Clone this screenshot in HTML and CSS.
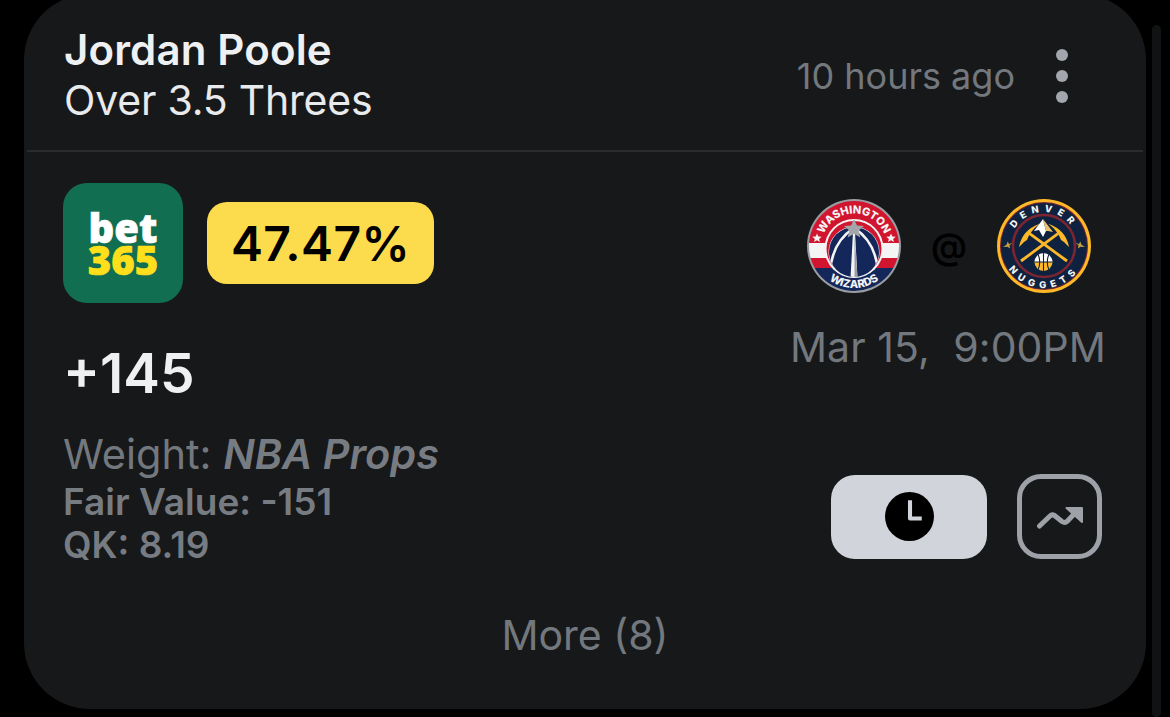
FILE: index.html
```html
<!DOCTYPE html>
<html lang="en">
<head>
<meta charset="utf-8">
<title>Bet card</title>
<link rel="stylesheet" href="styles.css">
</head>
<body>
<div class="stage">
  <main class="card">
    <header class="head">
      <div class="who">
        <div class="name">Jordan Poole</div>
        <div class="market">Over 3.5 Threes</div>
      </div>
      <div class="meta">
        <span class="ago">10 hours ago</span>
        <span class="dots"><i></i><i></i><i></i></span>
      </div>
    </header>
    <section class="body">
      <div class="left">
        <div class="book-row">
          <div class="book"><span class="b1">bet</span><span class="b2">365</span></div>
          <div class="pct">47.47%</div>
        </div>
        <div class="odds">+145</div>
        <div class="weight">Weight: <em>NBA Props</em></div>
        <div class="stat">Fair Value: -151</div>
        <div class="stat">QK: 8.19</div>
      </div>
      <div class="right">
        <div class="teams">
          <svg class="logo" viewBox="0 0 96 96" aria-label="Washington Wizards">
            <defs>
              <clipPath id="wc"><circle cx="48" cy="48" r="45"/></clipPath>
              <clipPath id="wb"><circle cx="48" cy="54" r="25"/></clipPath>
              <path id="wtop" d="M15.5 48 A32.5 32.5 0 0 1 80.5 48"/>
              <path id="wbot" d="M6 48 A42 42 0 0 0 90 48"/>
            </defs>
            <circle cx="48" cy="48" r="47" fill="#9a9da3"/>
            <g clip-path="url(#wc)">
              <rect width="96" height="45" fill="#d2152f"/>
              <rect y="45" width="96" height="15" fill="#f4f4f4"/>
              <rect y="60" width="96" height="10" fill="#d2152f"/>
              <rect y="70" width="96" height="26" fill="#14275a"/>
            </g>
            <circle cx="48" cy="50.5" r="29.5" fill="#f4f4f4"/>
            <circle cx="48" cy="50.5" r="27.5" fill="#d2152f"/>
            <circle cx="48" cy="54" r="25.5" fill="#f4f4f4"/>
            <circle cx="48" cy="54" r="25" fill="#14275a"/>
            <g clip-path="url(#wb)">
              <path d="M24 74 Q26 44 48 30 Q70 44 72 74" fill="none" stroke="#f4f4f4" stroke-width="2.6"/>
              <path d="M44.5 80 L47 34 H49 L51.5 80Z" fill="#f4f4f4"/>
              <path d="M48.5 36 L51.5 80 H48.5Z" fill="#9a9da3"/>
            </g>
            <path d="M48 21 l3 6.5 7 .5 -5.4 4.6 1.7 7 -6.3 -3.8 -6.3 3.8 1.7 -7 -5.4 -4.6 7 -.5z" fill="#a2a5aa"/>
            <path d="M11 35.5 l1.3 3 3.4 .2 -2.6 2.2 .9 3.2 -3 -1.8 -3 1.8 .9 -3.2 -2.6 -2.2 3.4 -.2z M85 35.5 l1.3 3 3.4 .2 -2.6 2.2 .9 3.2 -3 -1.8 -3 1.8 .9 -3.2 -2.6 -2.2 3.4 -.2z" fill="#f4f4f4"/>
            <text class="w-text"><textPath href="#wtop" startOffset="50%" text-anchor="middle">WASHINGTON</textPath></text>
            <text class="w-text"><textPath href="#wbot" startOffset="50%" text-anchor="middle">WIZARDS</textPath></text>
          </svg>
          <span class="at">@</span>
          <svg class="logo" viewBox="0 0 96 96" aria-label="Denver Nuggets">
            <defs>
              <path id="dtop" d="M14 48 A34 34 0 0 1 82 48"/>
              <path id="dbot" d="M6 48 A42 42 0 0 0 90 48"/>
              <clipPath id="dball"><circle cx="47.5" cy="64" r="9"/></clipPath>
            </defs>
            <circle cx="48" cy="48" r="47" fill="#fdb927"/>
            <circle cx="48" cy="48" r="44" fill="#7c2530"/>
            <circle cx="48" cy="48" r="43" fill="#0e2240"/>
            <circle cx="48" cy="48" r="31" fill="none" stroke="#7c2530" stroke-width="2.6"/>
            <path d="M33.7 35.7 L71 63" stroke="#fdb927" stroke-width="2.8" fill="none"/>
            <path d="M62 35.7 L25 63" stroke="#fdb927" stroke-width="2.8" fill="none"/>
            <path d="M23 49 Q26 32 43.7 25.7 Q34 33 31 42 L28 44Z" fill="#fdb927"/>
            <path d="M73 49 Q70 32 52.3 25.7 Q62 33 65 42 L68 44Z" fill="#fdb927"/>
            <path d="M47 21 L38 33 L43 32 L47 39 L50 33Z" fill="#fff"/>
            <path d="M47 21 L57 34 L52 33 L50 33Z" fill="#e9c26a"/>
            <g clip-path="url(#dball)">
              <rect x="38" y="55" width="20" height="9" fill="#fff"/>
              <rect x="38" y="64" width="20" height="9" fill="#fdb927"/>
              <path d="M38 64 H58 M47.5 55 V73 M42 56 Q45.5 64 42 72 M53 56 Q49.5 64 53 72" stroke="#0e2240" stroke-width="1.1" fill="none"/>
            </g>
            <path d="M7 49 l3.5 -2.2 1.3 -3.4 1.3 2.8 3.4 -1.6 -3 3 .6 2.8 -2.6 -1.6z M89 49 l-3.5 -2.2 -1.3 -3.4 -1.3 2.8 -3.4 -1.6 3 3 -.6 2.8 2.6 -1.6z" fill="#c9a03a"/>
            <text class="d-text"><textPath href="#dtop" startOffset="50%" text-anchor="middle">DENVER</textPath></text>
            <text class="d-text"><textPath href="#dbot" startOffset="50%" text-anchor="middle">NUGGETS</textPath></text>
          </svg>
        </div>
        <div class="date">Mar 15,&nbsp; 9:00PM</div>
        <div class="actions">
          <button class="btn-clock" type="button" aria-label="Clock">
            <svg viewBox="0 0 48 48" width="49" height="49"><circle cx="24" cy="24" r="24" fill="#000"/><path d="M24.5 8 V26 H36" fill="none" stroke="#d1d5db" stroke-width="4" stroke-linejoin="round"/></svg>
          </button>
          <button class="btn-chart" type="button" aria-label="Chart">
            <svg viewBox="0 0 48 28" width="48" height="28"><path d="M3.5 23 L14 13 Q16 11 18.5 12.5 L26 18.5 Q29 20.5 31.5 18 L40 9" fill="none" stroke="#9ea2a8" stroke-width="5" stroke-linecap="round" stroke-linejoin="round"/><path d="M30.5 5 H46 V19Z" fill="#9ea2a8" stroke="#9ea2a8" stroke-width="2" stroke-linejoin="round"/></svg>
          </button>
        </div>
      </div>
    </section>
    <div class="more">More (8)</div>
  </main>
  <div class="scrollbar"></div>
</div>
</body>
</html>
```

FILE: styles.css
```css
* { box-sizing: border-box; }
html, body { margin: 0; height: 100%; background: #000; overflow: hidden; }
body { font-family: Inter, "Liberation Sans", sans-serif; }
.stage { display: flex; align-items: flex-start; padding-left: 24px; height: 717px; }
.card {
  width: 1122px; height: 715px; margin-top: -6px; flex: none;
  background: #17181a; border-radius: 66px;
  display: flex; flex-direction: column;
}
.scrollbar { width: 9px; height: 692px; margin: 25px 0 0 6px; background: #111213; border-radius: 5px; flex: none; }
.head {
  height: 158px; margin: 0 3px; padding: 31px 75px 0 37px;
  border-bottom: 2px solid #2a2b2d;
  display: flex; justify-content: space-between; align-items: flex-start;
}
.name { font-size: 42px; font-weight: 600; line-height: 50px; letter-spacing: .15px; color: #eef0f2; }
.market { font-size: 41px; line-height: 51px; letter-spacing: -.2px; color: #e8eaec; }
.meta { display: flex; align-items: center; gap: 41px; margin-top: 24px; }
.ago { font-size: 36px; line-height: 50px; color: #72787e; }
.dots { display: flex; flex-direction: column; gap: 9px; }
.dots i { display: block; width: 12px; height: 12px; border-radius: 50%; background: #a3a6ad; }
.body { flex: 1; display: flex; justify-content: space-between; padding: 31px 40px 0 39px; }
.book-row { display: flex; align-items: center; gap: 24px; }
.book {
  width: 120px; height: 120px; border-radius: 24px; background: #126e51;
  display: flex; flex-direction: column; align-items: center; justify-content: center;
  font-family: "Open Sans", sans-serif; font-weight: 800; font-size: 40px; line-height: 32px; padding-top: 2px;
  -webkit-text-stroke: .7px currentColor;
}
.b1 { color: #fff; }
.b2 { color: #ffdf1b; }
.pct {
  width: 227px; height: 82px; border-radius: 20px; background: #fcdc4d; color: #000;
  font-size: 48px; font-weight: 600; letter-spacing: .4px; display: flex; align-items: center; justify-content: center;
}
.odds { font-size: 55px; font-weight: 600; line-height: 60px; color: #eef0f2; margin-top: 40px; }
.weight { font-size: 41.5px; line-height: 51px; color: #72787e; margin-top: 26px; }
.weight em { font-weight: 600; color: #777c83; }
.stat { font-size: 37px; font-weight: 600; line-height: 43px; color: #777c83; }
.right { display: flex; flex-direction: column; align-items: flex-end; }
.teams { display: flex; align-items: center; gap: 29px; margin: 15px 14px 0 0; }
.logo { width: 96px; height: 96px; display: block; }
.at { font-size: 36px; font-weight: 600; color: #000; width: 36px; text-align: center; }
.w-text { font: 800 11px Inter, sans-serif; fill: #f4f4f4; }
.d-text { font: 800 9.5px Inter, sans-serif; fill: #f4f4f4; letter-spacing: 5.2px; }
.date { font-size: 41px; line-height: 50px; letter-spacing: .1px; color: #72787e; margin-top: 28px; }
.actions { display: flex; align-items: center; gap: 30px; margin: 102px 4px 0 0; }
.btn-clock {
  width: 156px; height: 84px; border: 0; border-radius: 24px; background: #d1d5db; padding: 0;
  display: flex; align-items: center; justify-content: center;
}
.btn-chart {
  width: 85px; height: 85px; border: 5px solid #9ea2a8; border-radius: 24px; background: transparent; padding: 0;
  display: flex; align-items: center; justify-content: center;
}
.more { font-size: 41px; line-height: 50px; color: #72787e; text-align: center; margin-bottom: 49px; }
```
